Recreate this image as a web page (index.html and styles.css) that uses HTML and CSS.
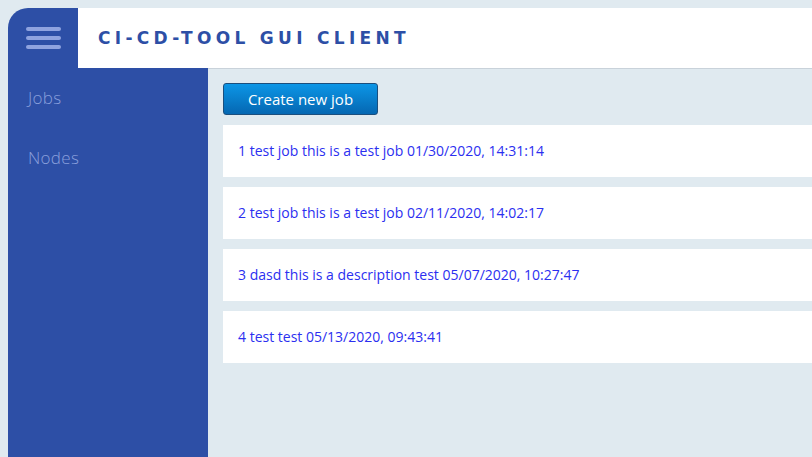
FILE: index.html
```html
<!DOCTYPE html>
<html>
<head>
<meta charset="utf-8">
<link rel="stylesheet" href="styles.css">
</head>
<body>
<div class="app">
  <div class="burger">
    <span></span><span></span><span></span>
  </div>
  <header class="header">
    <h1 class="title">CI-CD-TOOL GUI CLIENT</h1>
  </header>
  <nav class="sidebar">
    <a class="nav-item">Jobs</a>
    <a class="nav-item">Nodes</a>
  </nav>
  <main class="content">
    <button class="btn">Create new job</button>
    <div class="jobs">
      <div class="job"><a class="job-link">1 test job this is a test job 01/30/2020, 14:31:14</a></div>
      <div class="job"><a class="job-link">2 test job this is a test job 02/11/2020, 14:02:17</a></div>
      <div class="job"><a class="job-link">3 dasd this is a description test 05/07/2020, 10:27:47</a></div>
      <div class="job"><a class="job-link">4 test test 05/13/2020, 09:43:41</a></div>
    </div>
  </main>
</div>
</body>
</html>
```
FILE: styles.css
```css
*, *::before, *::after {
  box-sizing: border-box;
}
html, body {
  height: 100%;
}
body {
  margin: 8px 0 0 8px;
  background: #e0eaf0;
  font-family: "Open Sans", sans-serif;
  overflow: hidden;
}
.app {
  display: grid;
  grid-template-columns: 70px 130px 1fr;
  grid-template-rows: 61px 1fr;
  height: calc(100vh - 8px);
}
.burger {
  grid-column: 1;
  grid-row: 1;
  background: #2d4fa6;
  border-top-left-radius: 20px;
  display: flex;
  flex-direction: column;
  justify-content: center;
  align-items: center;
  gap: 5px;
  padding-bottom: 1px;
}
.burger span {
  display: block;
  width: 35px;
  height: 4px;
  border-radius: 2px;
  background: #8fa3df;
}
.header {
  grid-column: 2 / 4;
  grid-row: 1;
  background: #fff;
  border-bottom: 1px solid #c9d2da;
  display: flex;
  align-items: center;
  padding-left: 20px;
}
.title {
  margin: 0;
  font-family: "DejaVu Sans", sans-serif;
  font-weight: bold;
  font-size: 17px;
  letter-spacing: 4.3px;
  color: #2d4fa6;
}
.sidebar {
  grid-column: 1 / 3;
  grid-row: 2;
  background: #2d4fa6;
  display: flex;
  flex-direction: column;
  margin-top: -1px;
}
.nav-item {
  height: 60px;
  display: flex;
  align-items: center;
  padding-left: 20px;
  padding-bottom: 2px;
  font-size: 17px;
  font-weight: 300;
  letter-spacing: 0.3px;
  color: #8a9fdc;
}
.content {
  grid-column: 3;
  grid-row: 2;
  padding: 14px 0 0 15px;
  display: flex;
  flex-direction: column;
  align-items: flex-start;
  gap: 10px;
}
.btn {
  height: 32px;
  width: 155px;
  border: 1px solid #1b4f7e;
  border-radius: 3px;
  background: linear-gradient(#0c96e6, #0567b2);
  color: #fff;
  font-family: "Open Sans", sans-serif;
  font-size: 15px;
  padding: 0;
}
.jobs {
  align-self: stretch;
  display: flex;
  flex-direction: column;
  gap: 10px;
}
.job {
  height: 52px;
  background: #fff;
  display: flex;
  align-items: center;
  padding-left: 15px;
  padding-bottom: 2px;
}
.job-link {
  color: #2b2ff0;
  font-size: 14px;
}
```
